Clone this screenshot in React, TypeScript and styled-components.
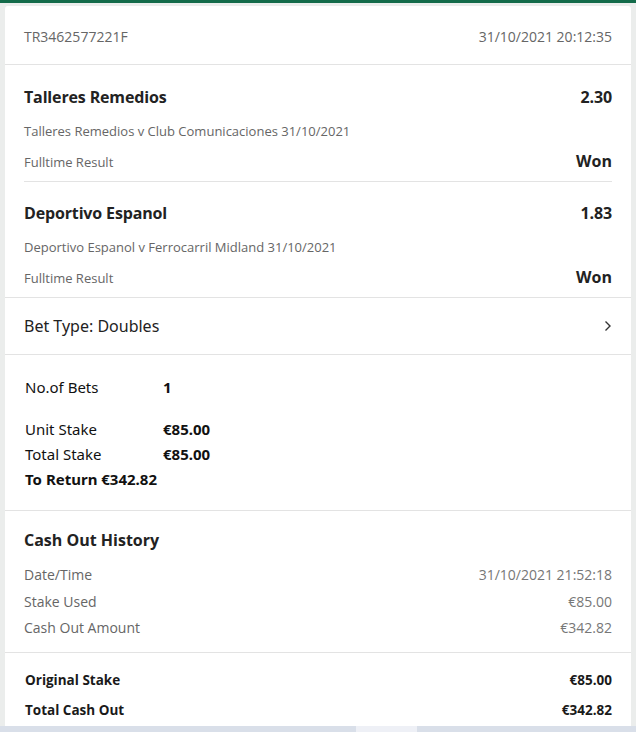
import React from 'react';
import styled, { createGlobalStyle } from 'styled-components';

const GlobalStyle = createGlobalStyle`
  html, body {
    margin: 0;
    padding: 0;
    background: #ebedec;
  }
  body {
    font-family: "Open Sans", "Noto Sans", sans-serif;
    color: #222;
  }
`;

const Page = styled.div`
  width: 636px;
  height: 732px;
  display: flex;
  flex-direction: column;
  overflow: hidden;
`;

const TopBar = styled.div`
  height: 3px;
  background: #136b4a;
`;

const Card = styled.div`
  flex: 1;
  margin: 3px 5px 0 5px;
  background: #fff;
  border-radius: 3px 3px 0 0;
  display: flex;
  flex-direction: column;
`;

const Header = styled.div`
  height: 59px;
  display: flex;
  align-items: center;
  justify-content: space-between;
  padding: 2px 19px 0;
  border-bottom: 1px solid #e3e3e3;
  font-size: 14px;
  color: #666;
  box-sizing: border-box;
`;

const Selection = styled.div<{ $full?: boolean }>`
  margin: 0 ${(p) => (p.$full ? 0 : 19)}px;
  padding: ${(p) => (p.$full ? 19 : 20)}px ${(p) => (p.$full ? 19 : 0)}px 9px;
  border-bottom: 1px solid #e3e3e3;
`;

const Row = styled.div<{ $gap?: number }>`
  display: flex;
  justify-content: space-between;
  align-items: flex-end;
  margin-top: ${(p) => p.$gap ?? 0}px;
`;

const Title = styled.div`
  font-size: 16px;
  font-weight: 700;
  line-height: 24px;
  color: #222;
  letter-spacing: -0.15px;
`;

const Sub = styled.div<{ $gap?: number }>`
  font-size: 13px;
  line-height: 20px;
  color: #666;
  margin-top: ${(p) => p.$gap ?? 0}px;
`;

const Result = styled.div`
  font-size: 16px;
  font-weight: 700;
  line-height: 22px;
  color: #222;
`;

const BetType = styled.div`
  height: 56px;
  padding: 0 19px;
  display: flex;
  align-items: center;
  justify-content: space-between;
  border-bottom: 1px solid #e3e3e3;
  font-family: "Noto Sans", "Open Sans", sans-serif;
  font-size: 16px;
  color: #222;
`;

const Stakes = styled.div`
  padding: 22px 20px 21px;
  border-bottom: 1px solid #e3e3e3;
  font-family: "Noto Sans", sans-serif;
  font-size: 15px;
  color: #111;
`;

const StakeRow = styled.div<{ $gap?: number }>`
  display: grid;
  grid-template-columns: 138px auto;
  line-height: 20px;
  height: 20px;
  margin-top: ${(p) => p.$gap ?? 0}px;
  align-items: center;
`;

const StakeValue = styled.span`
  font-weight: 700;
`;

const ReturnLine = styled.div`
  font-weight: 700;
  line-height: 20px;
  margin-top: 5px;
`;

const CashOut = styled.div`
  padding: 18px 19px 10px;
  border-bottom: 1px solid #e3e3e3;
`;

const CashTitle = styled.div`
  font-size: 16px;
  font-weight: 700;
  line-height: 22px;
  color: #222;
  margin-bottom: 11px;
`;

const CashRow = styled.div`
  display: flex;
  justify-content: space-between;
  font-size: 14px;
  line-height: 20px;
  height: 26.5px;
  align-items: center;
  color: #666;
  & > span:last-child {
    color: #777;
  }
`;

const Totals = styled.div`
  padding: 12px 19px 0 20px;
`;

const TotalRow = styled.div`
  display: flex;
  justify-content: space-between;
  font-size: 13.5px;
  font-weight: 700;
  line-height: 20px;
  height: 30px;
  align-items: center;
  color: #1a1a1a;
`;

const BottomBand = styled.div`
  height: 6px;
  display: flex;
  background: #d9dfe9;
`;

const BandSegment = styled.div<{ $w: number; $light?: boolean }>`
  width: ${(p) => p.$w}px;
  background: ${(p) => (p.$light ? '#eef0f6' : 'transparent')};
`;

const Chevron = () => (
  <svg width="8" height="12" viewBox="0 0 8 12" fill="none">
    <polyline points="1.5,1.5 6,6 1.5,10.5" stroke="#333" strokeWidth="1.4" />
  </svg>
);

type Leg = { team: string; odds: string; match: string; market: string; result: string };

const legs: Leg[] = [
  {
    team: 'Talleres Remedios',
    odds: '2.30',
    match: 'Talleres Remedios v Club Comunicaciones 31/10/2021',
    market: 'Fulltime Result',
    result: 'Won',
  },
  {
    team: 'Deportivo Espanol',
    odds: '1.83',
    match: 'Deportivo Espanol v Ferrocarril Midland 31/10/2021',
    market: 'Fulltime Result',
    result: 'Won',
  },
];

const App: React.FC = () => {
  return (
    <>
      <GlobalStyle />
      <Page>
        <TopBar />
        <Card>
          <Header>
            <span>TR3462577221F</span>
            <span>31/10/2021 20:12:35</span>
          </Header>
          {legs.map((leg, i) => (
            <Selection key={leg.team} $full={i === legs.length - 1}>
              <Row>
                <Title>{leg.team}</Title>
                <Title>{leg.odds}</Title>
              </Row>
              <Sub $gap={12}>{leg.match}</Sub>
              <Row $gap={9}>
                <Sub>{leg.market}</Sub>
                <Result>{leg.result}</Result>
              </Row>
            </Selection>
          ))}
          <BetType>
            <span>Bet Type: Doubles</span>
            <Chevron />
          </BetType>
          <Stakes>
            <StakeRow>
              <span>No.of Bets</span>
              <StakeValue>1</StakeValue>
            </StakeRow>
            <StakeRow $gap={22}>
              <span>Unit Stake</span>
              <StakeValue>€85.00</StakeValue>
            </StakeRow>
            <StakeRow $gap={5}>
              <span>Total Stake</span>
              <StakeValue>€85.00</StakeValue>
            </StakeRow>
            <ReturnLine>To Return €342.82</ReturnLine>
          </Stakes>
          <CashOut>
            <CashTitle>Cash Out History</CashTitle>
            <CashRow>
              <span>Date/Time</span>
              <span>31/10/2021 21:52:18</span>
            </CashRow>
            <CashRow>
              <span>Stake Used</span>
              <span>€85.00</span>
            </CashRow>
            <CashRow>
              <span>Cash Out Amount</span>
              <span>€342.82</span>
            </CashRow>
          </CashOut>
          <Totals>
            <TotalRow>
              <span>Original Stake</span>
              <span>€85.00</span>
            </TotalRow>
            <TotalRow>
              <span>Total Cash Out</span>
              <span>€342.82</span>
            </TotalRow>
          </Totals>
        </Card>
        <BottomBand>
          <BandSegment $w={356} />
          <BandSegment $w={61} $light />
        </BottomBand>
      </Page>
    </>
  );
};

export default App;
